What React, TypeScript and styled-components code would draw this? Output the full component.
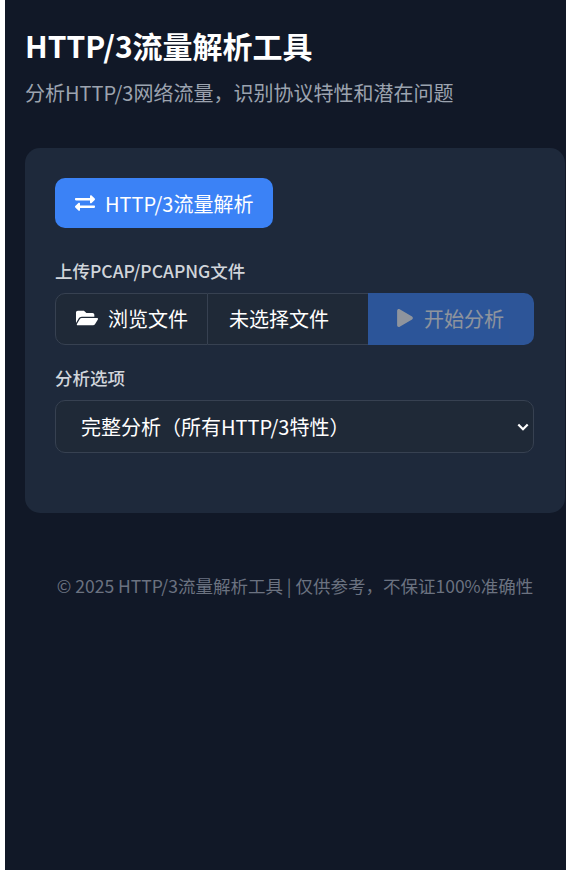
import React from "react";
import styled, { createGlobalStyle } from "styled-components";
import { FaExchangeAlt, FaFolderOpen, FaPlay } from "react-icons/fa";

const Global = createGlobalStyle`
  html, body { margin: 0; padding: 0; background: #ffffff; }
  body { font-family: "Noto Sans CJK SC", "Noto Sans", sans-serif; overflow: hidden; }
  * { box-sizing: border-box; }
`;

const Page = styled.div`
  margin-left: 5px;
  width: 561px;
  height: 870px;
  background: #111827;
  padding: 23px 0 0 20px;
  overflow: hidden;
`;

const Header = styled.header`
  margin-bottom: 40px;
`;

const Title = styled.h1`
  margin: 0 0 10px;
  font-size: 30px;
  line-height: 45px;
  font-weight: 700;
  color: #ffffff;
`;

const Subtitle = styled.p`
  margin: 0;
  font-size: 20px;
  line-height: 30px;
  color: #9ca3af;
`;

const Card = styled.section`
  width: 540px;
  height: 365px;
  padding: 30px;
  background: #1e293b;
  border-radius: 15px;
`;

const TabButton = styled.button`
  display: inline-flex;
  align-items: center;
  gap: 10px;
  height: 50px;
  padding: 0 20px;
  border: 0;
  border-radius: 10px;
  background: #3b82f6;
  color: #ffffff;
  font: inherit;
  font-size: 20px;
`;

const Field = styled.div`
  margin-top: ${(p: { $top: number }) => p.$top}px;
`;

const Label = styled.label`
  display: block;
  margin-bottom: 10px;
  font-size: 17.5px;
  line-height: 25px;
  font-weight: 500;
  color: #d1d5db;
`;

const UploadGroup = styled.div`
  display: flex;
  width: 479px;
  height: 52px;
  font-size: 20px;
`;

const BrowseButton = styled.div`
  display: flex;
  align-items: center;
  gap: 10px;
  width: 153px;
  padding: 0 0 2px 20px;
  background: #1f2937;
  border: 1px solid #374151;
  border-radius: 10px 0 0 10px;
  color: #ffffff;
`;

const FileName = styled.div`
  display: flex;
  align-items: center;
  width: 160px;
  padding: 0 0 2px 21px;
  background: #1f2937;
  border-top: 1px solid #374151;
  border-bottom: 1px solid #374151;
  color: #ffffff;
`;

const StartButton = styled.button`
  display: flex;
  align-items: center;
  justify-content: center;
  gap: 10px;
  flex: 1;
  padding: 0 2px 2px 0;
  border: 0;
  border-radius: 0 10px 10px 0;
  background: #3b82f6;
  color: #ffffff;
  font: inherit;
  opacity: 0.5;
`;

const SelectWrap = styled.div`
  position: relative;
  width: 479px;
`;

const Select = styled.select`
  display: block;
  width: 100%;
  height: 53px;
  padding: 0 30px 0 25px;
  appearance: none;
  background: #1f2937;
  border: 1px solid #374151;
  border-radius: 10px;
  color: #ffffff;
  font: inherit;
  font-size: 20px;
`;

const Chevron = styled.svg`
  position: absolute;
  top: 23px;
  right: 5px;
  width: 12px;
  height: 8px;
  pointer-events: none;
`;

const Footer = styled.footer`
  width: 540px;
  margin-top: 60px;
  text-align: center;
  font-size: 17.5px;
  line-height: 26px;
  color: #6b7280;
`;

export default function App() {
  return (
    <>
      <Global />
      <Page>
        <Header>
          <Title>HTTP/3流量解析工具</Title>
          <Subtitle>分析HTTP/3网络流量，识别协议特性和潜在问题</Subtitle>
        </Header>
        <Card>
          <TabButton>
            <FaExchangeAlt size={20} />
            HTTP/3流量解析
          </TabButton>
          <Field $top={30}>
            <Label>上传PCAP/PCAPNG文件</Label>
            <UploadGroup>
              <BrowseButton>
                <FaFolderOpen size={22} />
                浏览文件
              </BrowseButton>
              <FileName>未选择文件</FileName>
              <StartButton disabled>
                <FaPlay size={18} />
                开始分析
              </StartButton>
            </UploadGroup>
          </Field>
          <Field $top={20}>
            <Label>分析选项</Label>
            <SelectWrap>
              <Select defaultValue="full">
                <option value="full">完整分析（所有HTTP/3特性）</option>
              </Select>
              <Chevron viewBox="0 0 12 8" aria-hidden="true">
                <path d="M1.3 1.5 6 6.2l4.7-4.7" fill="none" stroke="#ffffff" strokeWidth="2.2" />
              </Chevron>
            </SelectWrap>
          </Field>
        </Card>
        <Footer>© 2025 HTTP/3流量解析工具 | 仅供参考，不保证100%准确性</Footer>
      </Page>
    </>
  );
}
